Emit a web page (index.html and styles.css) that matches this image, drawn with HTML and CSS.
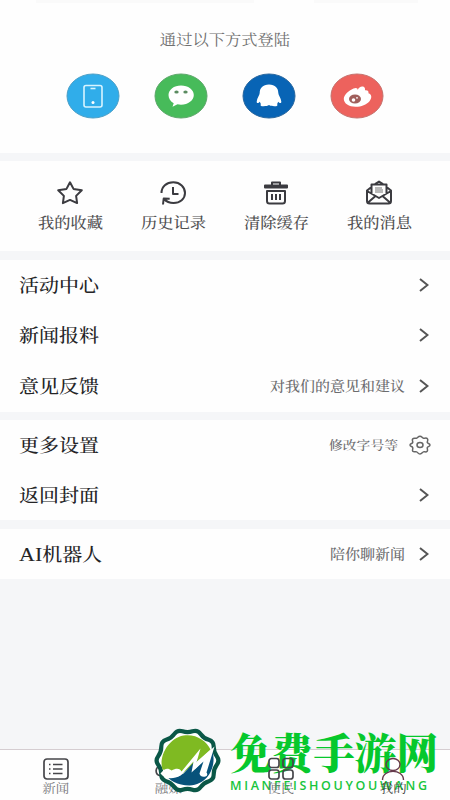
FILE: index.html
```html
<!DOCTYPE html>
<html lang="zh-CN">
<head>
<meta charset="utf-8">
<title>我的</title>
<link rel="stylesheet" href="styles.css">
</head>
<body>
<main class="app">
  <section class="login">
    <div class="hint-edge"><i></i><i></i></div>
    <p class="login-title"><span class="t">通过以下方式登陆</span></p>
    <div class="login-row">
      <svg viewBox="0 0 54 46"><ellipse class="phone" cx="27" cy="23" rx="26" ry="22"/><g fill="none" stroke="#d8f4ff" stroke-width="1.6"><rect x="18" y="12.500" width="18" height="21.500" rx="2"/><path d="M24.500 15.500h5"/></g><circle cx="27" cy="29.500" r="1.500" fill="#fff"/></svg>
      <svg viewBox="0 0 54 46"><ellipse class="wechat" cx="27" cy="23" rx="26" ry="22"/><path fill="#fff" d="M27 12.500c-7 0-12.500 4.200-12.500 9.500 0 3.500 2 6.500 5.200 8.200l-1.200 3.600 5-2.500c1.100.3 2.300.4 3.500.4 7.200 0 12.800-4.400 12.800-9.700S34.200 12.500 27 12.500z"/><ellipse cx="22.500" cy="19" rx="2.200" ry="1.600" fill="#5a8b60"/><ellipse cx="31.500" cy="19" rx="2.200" ry="1.600" fill="#5a8b60"/></svg>
      <svg viewBox="0 0 54 46"><ellipse class="qq" cx="27" cy="23" rx="26" ry="22"/><path fill="#fff" d="M27 11.500c-6.200 0-9.300 3.600-9.300 8.500 0 2-2.700 5-3 8.500-.1 2 1.500 2.200 3.200.2.200 1 .6 1.700 1 2.300-1 1.500 0 2.300 2.600 2.300s4.300-.4 5.500-1.200c1.200.8 2.900 1.200 5.500 1.200s3.600-.8 2.600-2.300c.4-.6.8-1.300 1-2.300 1.700 2 3.300 1.800 3.200-.2-.3-3.500-3-6.500-3-8.500 0-4.900-3.100-8.500-9.300-8.500z"/></svg>
      <svg viewBox="0 0 54 46"><ellipse class="weibo" cx="27" cy="23" rx="26" ry="22"/><path fill="#fff" d="M23.500 15.500c2.500-1.200 4.400-.5 4.200 1.500 1-2.800 4-4.300 6.300-3 1.200.7 1 2.100 1 3.300 2.500-.3 4 .7 3.400 3 3.700 1.200 3.600 4.900 1.100 8-3 3.600-8.500 5.600-14 5.500-6.500-.1-11.700-3.300-11.700-7.800 0-4 4.700-8.400 9.700-10.500z"/><ellipse cx="25" cy="26" rx="6" ry="4.500" fill="#a05f5c"/><circle cx="23.500" cy="27" r="1.800" fill="#fff"/><circle cx="27" cy="24.800" r=".9" fill="#fff"/></svg>
    </div>
  </section>

  <section class="shortcuts">
    <div class="shortcut"><svg viewBox="0 0 28 26"><path d="M14 2.300l3.500 6.600 8.300 1.400-5.700 5.600 1 7.200-7.100-3.200-7.100 3.200 1-7.200-5.700-5.600 8.300-1.400z"/></svg><span class="t">我的收藏</span></div>
    <div class="shortcut"><svg viewBox="0 0 28 26"><path d="M2.500 13C2.500 6.500 7.500 2.300 14.300 2.300S26 7 26 13s-5 10-11.500 10c-3.500 0-7-1.300-9.500-4M4 24.500l.7-6 6 .2M14 7v7h5.500"/></svg><span class="t">历史记录</span></div>
    <div class="shortcut"><svg viewBox="0 0 28 26"><path d="M10 5V2.500h8V5M3 5.500h22v2H3zM5 11h18v10q0 2.500-2.500 2.500h-13Q5 23.500 5 21zM10 14v6M14 14v6M18 14v6"/></svg><span class="t">清除缓存</span></div>
    <div class="shortcut"><svg viewBox="0 0 28 26"><path d="M6.500 7L2 10.500V21q0 2.500 2.500 2.500h19Q26 23.500 26 21V10.500L21.500 7M10 4l4-2.500L18 4M6.500 14V4.500h15V14M2 11l12 7 12-7M2.500 23l8-7M25.500 23l-8-7"/><path class="thin" d="M10 8h7M10 10h8M10 12h8"/></svg><span class="t">我的消息</span></div>
  </section>

  <section class="menu">
    <div class="row"><b class="t">活动中心</b><svg class="arrow" viewBox="0 0 10 14"><path d="M1 1l7.500 6L1 13"/></svg></div>
    <div class="row"><b class="t">新闻报料</b><svg class="arrow" viewBox="0 0 10 14"><path d="M1 1l7.500 6L1 13"/></svg></div>
    <div class="row"><b class="t">意见反馈</b><span class="note t">对我们的意见和建议</span><svg class="arrow" viewBox="0 0 10 14"><path d="M1 1l7.500 6L1 13"/></svg></div>
  </section>

  <section class="menu settings">
    <div class="row"><b class="t">更多设置</b><span class="note small t">修改字号等</span><svg class="gear" viewBox="0 0 22 20"><path d="M11 1.200C13 1.200 13 3 14.500 3.200s3-.8 4 .7-.6 2.600-.2 3.700S21 8.500 21 10s-2.200 1.500-2.700 2.500 1 2.600-.1 3.800-2.500.2-3.800.6S13 19 11 19s-2-1.700-3.400-2.100-2.800.5-3.800-.6.500-2.700-.1-3.800S1 11.500 1 10s2.200-1.400 2.700-2.400-1.100-2.500-.1-3.700 2.500-.5 3.900-.7S9 1.200 11 1.200z"/><ellipse cx="11" cy="10" rx="3" ry="2.500"/></svg></div>
    <div class="row"><b class="t">返回封面</b><svg class="arrow" viewBox="0 0 10 14"><path d="M1 1l7.500 6L1 13"/></svg></div>
  </section>

  <section class="menu robot">
    <div class="row"><b class="t"><span class="latin">AI</span>机器人</b><span class="note t">陪你聊新闻</span><svg class="arrow" viewBox="0 0 10 14"><path d="M1 1l7.500 6L1 13"/></svg></div>
  </section>

  <nav class="tabs">
    <div class="tab"><svg viewBox="0 0 28 24"><rect x="2" y="2" width="24" height="20" rx="3"/><path d="M11 7.500h9.500M11 12h9.500M11 16.500h9.500M7 7.500h1.500M7 12h1.500M7 16.500h1.500"/></svg><span class="t">新闻</span></div>
    <div class="tab"><svg viewBox="0 0 28 24"><path d="M7 19c-7-1-6-10 0-10 2-8 13-6 14 0 8 1 7 10 0 10z"/></svg><span class="t">融媒</span></div>
    <div class="tab front"><svg viewBox="0 0 28 24"><rect x="2" y="1.500" width="10" height="9" rx="2.500"/><rect x="16" y="1.500" width="10" height="9" rx="2.500"/><rect x="2" y="13" width="10" height="9" rx="2.500"/><rect x="16" y="13" width="10" height="9" rx="2.500"/></svg><span class="t">便民</span></div>
    <div class="tab front active"><svg viewBox="0 0 28 24"><ellipse cx="14" cy="7.500" rx="7" ry="6"/><path d="M3.500 23c0-11.500 21-11.500 21 0"/></svg><span class="t">我的</span></div>
  </nav>

  <svg class="watermark" viewBox="0 0 300 75">
    <g transform="translate(33.500 35.500)">
      <path fill="#fff" stroke="#0a5747" stroke-width="4.200" d="M29.300 4.300Q26.200 8.500 26.200 13.800 26.300 19.100 21.300 20.700 16.200 22.200 13.100 26.600 10 30.900 5 29.200 0 27.500-5 29.200-10 30.900-13.100 26.600-16.200 22.200-21.300 20.700-26.300 19.100-26.200 13.800-26.200 8.500-29.300 4.300-32.500 0-29.300-4.300-26.200-8.500-26.200-13.800-26.300-19.100-21.300-20.700-16.200-22.200-13.100-26.600-10-30.900-5-29.200 0-27.500 5-29.200 10-30.900 13.100-26.600 16.200-22.200 21.300-20.700 26.300-19.100 26.200-13.800 26.200-8.500 29.300-4.300 32.500 0 29.300 4.300z"/>
      <path fill="#7fba22" d="M-25 9C-29-3-20-22-4-25 8-27 19-20 23-11L5 5-8 15-19 10z"/>
      <path fill="#07527a" d="M-23 12c8 6 13 5 19 1L10-2 7 9 25-9c4 13-3 33-23 34-12 0-21-5-25-13z"/>
      <path fill="#fff" d="M-27 13c4-5 7-6 11-3 5-3 9-2 10 1L13-12 9 2 27-14 19 12q2 3-1 4-5 1-6-3l4-12L4 12 6 1-7 15c-7 4-15 4-20-2z"/>
    </g>
    <text class="wm-title" x="76" y="43.500" textLength="208" lengthAdjust="spacingAndGlyphs">免费手游网</text>
    <text class="wm-sub" x="76" y="65" textLength="197">MIANFEISHOUYOUWANG</text>
  </svg>
</main>
</body>
</html>
```
FILE: styles.css
```css
* { box-sizing: border-box; }

body {
  margin: 0;
  font-family: "Noto Serif CJK SC", "Noto Sans CJK SC", serif;
  color: #303033;
}

.app {
  position: relative;
  display: flex;
  flex-direction: column;
  width: 450px;
  height: 800px;
  overflow: hidden;
  background: #f5f6f8;
}

section { background: #fefefe; flex: none; }
svg { display: block; fill: none; }

.t {
  display: inline-block;
  line-height: 20px;
  white-space: nowrap;
  transform: translateY(-.7px) scaleY(.89);
}

.login { height: 153px; }

.hint-edge {
  display: flex;
  gap: 60px;
  height: 3px;
  padding-left: 36px;
}
.hint-edge i { width: 218px; background: #fafafa; }
.hint-edge i + i { width: 104px; }

.login-title {
  margin: 24px 0 0;
  height: 20px;
  text-align: center;
  font-size: 16.3px;
  color: #707070;
}
.login-row {
  display: flex;
  gap: 34px;
  padding: 26px 0 0 65.500px;
}
.login-row svg { width: 54px; height: 46px; }
.phone { fill: #30adea; stroke: #4b9fc7; }
.wechat { fill: #47bb5a; stroke: #5da76a; }
.qq { fill: #0864b5; stroke: #28669e; }
.weibo { fill: #ed625d; stroke: #c6716d; }

.shortcuts {
  display: flex;
  height: 90px;
  margin-top: 8px;
  padding: 19px 19px 0 19px;
}
.shortcut {
  display: flex;
  flex: 1;
  flex-direction: column;
  align-items: center;
  font-size: 16.3px;
  font-weight: 500;
  color: #505052;
}
.shortcut svg {
  width: 28px;
  height: 26px;
  margin: 0 1px 6px 0;
  stroke: #3b3b40;
  stroke-width: 2;
  stroke-linejoin: round;
}
.shortcut .thin { stroke: #777; stroke-width: 1; }

.menu {
  height: 152px;
  margin-top: 9px;
  padding-right: 21px;
}
.settings { height: 100px; margin-top: 8px; }
.robot { height: 50px; }

.row {
  display: flex;
  align-items: center;
  height: 50.3px;
  padding-left: 19px;
}
.settings .row { height: 50px; }
.row b {
  margin-right: auto;
  font-size: 20px;
  font-weight: 500;
  color: #242426;
  transform: translateY(.3px) scaleY(.89);
}
.latin { font-family: "Liberation Serif", serif; font-size: 22px; font-weight: 400; }
.note { font-size: 15px; font-weight: 500; color: #6c6c6e; }
.note.small { font-size: 13.800px; }
.arrow {
  width: 10px;
  height: 14px;
  margin-left: 14px;
  stroke: #555;
  stroke-width: 2;
}
.gear {
  width: 22px;
  height: 20px;
  margin: 0 -2px 0 11px;
  stroke: #666;
  stroke-width: 1.5;
}

.tabs {
  display: flex;
  height: 51px;
  margin-top: auto;
  border-top: 1px solid #d5cdd1;
  background: #fefefe;
}
.tab {
  display: flex;
  flex: 1;
  flex-direction: column;
  align-items: center;
  padding-top: 7px;
  font-size: 13.500px;
  color: #77777a;
}
.tab svg {
  width: 28px;
  height: 24px;
  margin-left: -1px;
  stroke: #46464a;
  stroke-width: 1.700;
}
.tab .t { margin: -3px 0 0 -1px; }
.front { position: relative; z-index: 2; }
.active { color: #444; }
.active svg { stroke: #65394b; stroke-width: 1.400; }

.watermark {
  position: absolute;
  z-index: 1;
  left: 154px;
  top: 725px;
  width: 300px;
  height: 75px;
}
.wm-title {
  font-family: "Noto Serif CJK SC", "Noto Sans CJK SC", serif;
  font-size: 42px;
  font-weight: 900;
  fill: #06c82c;
}
.wm-sub {
  font-family: "Open Sans", sans-serif;
  font-size: 12.500px;
  font-weight: 600;
  fill: #18c53c;
}
```
